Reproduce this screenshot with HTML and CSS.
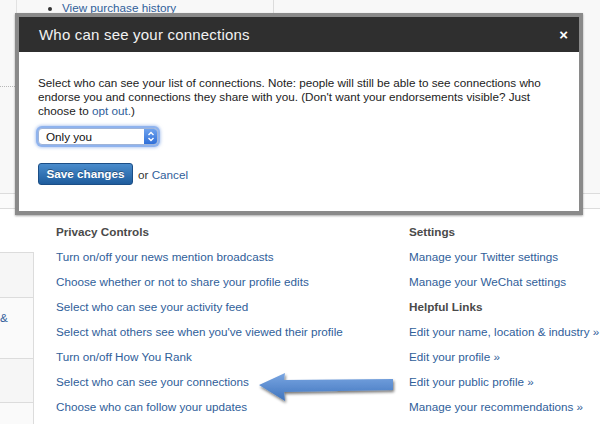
FILE: index.html
```html
<!DOCTYPE html>
<html>
<head>
<meta charset="utf-8">
<link rel="stylesheet" href="styles.css">
</head>
<body>
<div class="page">
  <div class="top">
    <div class="top-left"></div>
    <div class="top-mid">
      <ul class="bullets"><li><a href="#">View purchase history</a></li></ul>
    </div>
    <div class="top-right"></div>
  </div>
  <div class="band"></div>
  <div class="main">
    <div class="sidebar">
      <div class="side-gap"></div>
      <div class="side-box b1"></div>
      <div class="side-box b2"><span class="amp">&amp;</span></div>
      <div class="side-box b3"></div>
      <div class="side-box b4"></div>
    </div>
    <div class="col col1">
      <h3>Privacy Controls</h3>
      <a href="#">Turn on/off your news mention broadcasts</a>
      <a href="#">Choose whether or not to share your profile edits</a>
      <a href="#">Select who can see your activity feed</a>
      <a href="#">Select what others see when you've viewed their profile</a>
      <a href="#">Turn on/off How You Rank</a>
      <a href="#">Select who can see your connections</a>
      <a href="#">Choose who can follow your updates</a>
    </div>
    <div class="col col2">
      <h3>Settings</h3>
      <a href="#">Manage your Twitter settings</a>
      <a href="#">Manage your WeChat settings</a>
      <h3>Helpful Links</h3>
      <a href="#">Edit your name, location &amp; industry »</a>
      <a href="#">Edit your profile »</a>
      <a href="#">Edit your public profile »</a>
      <a href="#">Manage your recommendations »</a>
    </div>
  </div>
</div>

<div class="modal">
  <div class="modal-head">
    <span class="modal-title">Who can see your connections</span>
    <span class="close">×</span>
  </div>
  <div class="modal-body">
    <p class="note">Select who can see your list of connections. Note: people will still be able to see connections who endorse you and connections they share with you. (Don't want your endorsements visible? Just choose to <a href="#">opt out.</a>)</p>
    <div class="select">
      <span class="select-text">Only you</span>
      <span class="stepper">
        <svg width="8" height="11" viewBox="0 0 8 11"><path d="M1.5 4 L4 1.5 L6.5 4 M1.5 7 L4 9.5 L6.5 7" fill="none" stroke="#fff" stroke-width="1.4"/></svg>
      </span>
    </div>
    <div class="actions">
      <span class="btn">Save changes</span>
      <span class="or">or <a href="#">Cancel</a></span>
    </div>
  </div>
</div>

<svg class="arrow" width="150" height="50" viewBox="0 0 150 50">
  <defs>
    <linearGradient id="ag" x1="0" y1="0" x2="0" y2="1">
      <stop offset="0" stop-color="#7aa6e2"/>
      <stop offset="1" stop-color="#3f74bd"/>
    </linearGradient>
    <filter id="sh" x="-10%" y="-30%" width="130%" height="180%">
      <feGaussianBlur in="SourceAlpha" stdDeviation="1.5"/>
      <feOffset dx="1" dy="2" result="b"/>
      <feComponentTransfer><feFuncA type="linear" slope="0.55"/></feComponentTransfer>
      <feMerge><feMergeNode/><feMergeNode in="SourceGraphic"/></feMerge>
    </filter>
  </defs>
  <polygon points="4,20 30,8 29,15 138,14 138,25 29,27 30,36" fill="url(#ag)" filter="url(#sh)"/>
</svg>
</body>
</html>
```
FILE: styles.css
```css
* { box-sizing: border-box; }
html, body { margin: 0; padding: 0; }
body {
  width: 600px;
  height: 424px;
  overflow: hidden;
  background: #fff;
  font-family: "Liberation Sans", Arial, Helvetica, sans-serif;
  font-size: 11.7px;
  color: #333;
  position: relative;
}
a { color: #30609a; text-decoration: none; }

.top {
  display: flex;
  height: 194px;
  background: #f8f8f8;
  border-bottom: 1px solid #dcdcdc;
}
.top-left {
  width: 17px;
  height: 87px;
  border-right: 1px solid #e2e2e2;
  border-bottom: 1px dotted #b8b8b8;
}
.top-mid {
  width: 257px;
  border-right: 1px solid #dcdcdc;
  height: 14px;
}
.top-right { flex: 1; }
.bullets {
  margin: 0;
  padding: 1px 0 0 45px;
  line-height: 14px;
  list-style: disc;
}
.band {
  height: 15px;
  background: #fbfbfb;
  border-bottom: 1px solid #dcdcdc;
}

.main {
  display: flex;
  padding-top: 10px;
}
.sidebar {
  width: 34px;
  flex-shrink: 0;
  display: flex;
  flex-direction: column;
  margin-right: 22px;
}
.side-gap { height: 33px; }
.side-box {
  background: #f6f6f6;
  border-right: 1px solid #dcdcdc;
  border-top: 1px solid #dcdcdc;
  position: relative;
}
.b1 { height: 45px; }
.b2 { height: 61px; background: #fafafa; }
.b3 { height: 44px; }
.b4 { height: 30px; background: #fafafa; }
.amp {
  display: block;
  padding-top: 13px;
  margin-left: 0;
  color: #30609a;
}

.col {
  display: flex;
  flex-direction: column;
  line-height: 25px;
  white-space: nowrap;
  flex-shrink: 0;
}
.col1 { width: 353px; }
.col h3 {
  margin: 0;
  font-size: 11.7px;
  font-weight: bold;
  color: #4a4a4a;
}

.modal {
  position: absolute;
  left: 15px;
  top: 13px;
  width: 568px;
  height: 202px;
  border: 4px solid #8a8a8a;
  background: #fff;
  box-shadow: 0 1px 2px rgba(0,0,0,0.35);
}
.modal-head {
  height: 35px;
  background: #2f2f2f;
  display: flex;
  align-items: center;
  justify-content: space-between;
  padding: 0 11px 0 20px;
}
.modal-title {
  color: #f2f2f2;
  font-size: 15px;
  letter-spacing: 0.2px;
}
.close {
  color: #fff;
  font-weight: bold;
  font-size: 15px;
}
.modal-body {
  padding: 24px 19px 0 19px;
}
.note {
  margin: 0;
  line-height: 14px;
  color: #222;
}
.select {
  margin-top: 10px;
  width: 120px;
  height: 17px;
  border: 1px solid #9fb4d8;
  border-radius: 4px;
  display: flex;
  align-items: center;
  justify-content: space-between;
  box-shadow: 0 0 0 2px #8fb3ee, 0 0 3px 3px rgba(120,160,230,0.5);
  background: #fff;
  padding-left: 7px;
  color: #111;
}
.stepper {
  width: 13px;
  height: 15px;
  border-radius: 0 3px 3px 0;
  background: linear-gradient(#6ea2ee, #2f6fd8);
  display: flex;
  align-items: center;
  justify-content: center;
}
.actions {
  margin-top: 18px;
  display: flex;
  align-items: center;
}
.btn {
  display: inline-block;
  width: 95px;
  height: 22px;
  line-height: 20px;
  text-align: center;
  color: #fff;
  font-weight: bold;
  border: 1px solid #1b4e86;
  border-radius: 3px;
  background: linear-gradient(#4a8ccc, #1e5c9d);
  text-shadow: 0 -1px 0 rgba(0,0,0,0.35);
}
.or {
  margin-left: 5px;
  color: #333;
}

.arrow {
  position: absolute;
  left: 255px;
  top: 365px;
}
```
